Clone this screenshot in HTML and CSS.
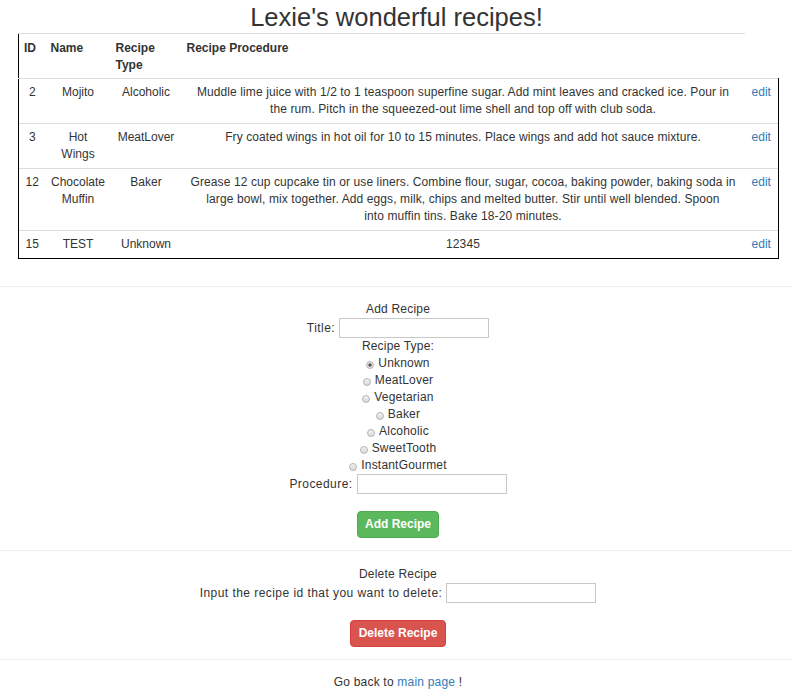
FILE: index.html
```html
<!DOCTYPE html>
<html lang="en">
<head>
<meta charset="utf-8">
<title>Lexie's wonderful recipes!</title>
<link rel="stylesheet" href="styles.css">
</head>
<body>
<h1 class="title">Lexie's wonderful recipes!</h1>
<table class="recipes">
  <colgroup>
    <col class="c-id"><col class="c-name"><col class="c-type"><col class="c-proc"><col class="c-edit">
  </colgroup>
  <thead>
    <tr><th>ID</th><th>Name</th><th>Recipe Type</th><th>Recipe Procedure</th></tr>
  </thead>
  <tbody>
    <tr>
      <td>2</td><td>Mojito</td><td>Alcoholic</td>
      <td class="proc">Muddle lime juice with 1/2 to 1 teaspoon superfine sugar. Add mint leaves and cracked ice. Pour in<br>the rum. Pitch in the squeezed-out lime shell and top off with club soda.</td>
      <td><a href="#">edit</a></td>
    </tr>
    <tr>
      <td>3</td><td>Hot Wings</td><td>MeatLover</td>
      <td class="proc">Fry coated wings in hot oil for 10 to 15 minutes. Place wings and add hot sauce mixture.</td>
      <td><a href="#">edit</a></td>
    </tr>
    <tr>
      <td>12</td><td>Chocolate Muffin</td><td>Baker</td>
      <td class="proc">Grease 12 cup cupcake tin or use liners. Combine flour, sugar, cocoa, baking powder, baking soda in<br>large bowl, mix together. Add eggs, milk, chips and melted butter. Stir until well blended. Spoon<br>into muffin tins. Bake 18-20 minutes.</td>
      <td><a href="#">edit</a></td>
    </tr>
    <tr>
      <td>15</td><td>TEST</td><td>Unknown</td>
      <td class="proc">12345</td>
      <td><a href="#">edit</a></td>
    </tr>
  </tbody>
</table>

<div class="rule rule-first"></div>

<section class="panel panel-add">
  <div class="line">Add Recipe</div>
  <div class="field"><label for="title">Title:</label><input id="title" class="text-input" type="text"></div>
  <div class="line">Recipe Type:</div>
  <label class="radio"><input type="radio" name="rtype" checked><span>Unknown</span></label>
  <label class="radio"><input type="radio" name="rtype"><span>MeatLover</span></label>
  <label class="radio"><input type="radio" name="rtype"><span>Vegetarian</span></label>
  <label class="radio"><input type="radio" name="rtype"><span>Baker</span></label>
  <label class="radio"><input type="radio" name="rtype"><span>Alcoholic</span></label>
  <label class="radio"><input type="radio" name="rtype"><span>SweetTooth</span></label>
  <label class="radio"><input type="radio" name="rtype"><span>InstantGourmet</span></label>
  <div class="field"><label for="proc">Procedure:</label><input id="proc" class="text-input" type="text"></div>
  <div class="btn-row"><button class="btn btn-add" type="button">Add Recipe</button></div>
</section>

<div class="rule"></div>

<section class="panel panel-delete">
  <div class="line">Delete Recipe</div>
  <div class="field"><label for="del">Input the recipe id that you want to delete:</label><input id="del" class="text-input" type="text"></div>
  <div class="btn-row"><button class="btn btn-delete" type="button">Delete Recipe</button></div>
</section>

<div class="rule"></div>

<p class="back">Go back to <a href="#">main page</a> !</p>
</body>
</html>
```
FILE: styles.css
```css
html, body {
  margin: 0;
  padding: 0;
  background: #fff;
}
body {
  font-family: "Liberation Sans", Arial, sans-serif;
  font-size: 12px;
  line-height: 17px;
  color: #333;
}
a {
  color: #337ab7;
  text-decoration: none;
}

.title {
  margin: 0;
  height: 33px;
  font-size: 25.5px;
  line-height: 34px;
  font-weight: normal;
  text-align: center;
  color: #333;
}

.recipes {
  border-collapse: collapse;
  table-layout: fixed;
  width: 760px;
  margin-left: 18px;
}
.c-id { width: 27px; }
.c-name { width: 65px; }
.c-type { width: 71px; }
.c-proc { width: 563px; }
.c-edit { width: 34px; }

.recipes th {
  padding: 6px 5px 4px;
  border-top: 1px solid #ddd;
  border-bottom: 1px solid #ddd;
  text-align: left;
  vertical-align: top;
  font-weight: bold;
}
.recipes td {
  padding: 5px;
  border-top: 1px solid #ddd;
  text-align: center;
  vertical-align: top;
}
.recipes td.proc {
  letter-spacing: 0.1px;
  white-space: nowrap;
}
.recipes th:first-child,
.recipes td:first-child {
  border-left: 1px solid #000;
}
.recipes td:last-child {
  border-right: 1px solid #000;
}
.recipes tbody tr:last-child td {
  border-bottom: 1px solid #000;
}

.rule {
  height: 1px;
  background: #eee;
}
.rule-first {
  margin-top: 27px;
}

.panel {
  display: flex;
  flex-direction: column;
  align-items: center;
  text-align: center;
  letter-spacing: 0.2px;
}
.panel-add {
  padding: 14px 0 12px 3px;
}
.panel-delete {
  padding: 15px 0 12px 3px;
}
.panel .field label {
  letter-spacing: 0.45px;
}

.line {
  height: 17px;
}
.field {
  display: flex;
  align-items: center;
  justify-content: center;
  gap: 4px;
  height: 20px;
}
.text-input {
  box-sizing: border-box;
  width: 150px;
  height: 20px;
  margin: 0;
  padding: 1px 3px;
  border: 1px solid #c8c8c8;
  background: #fff;
  font: inherit;
}

.radio {
  display: flex;
  align-items: center;
  justify-content: center;
  height: 17px;
}
.radio input {
  appearance: none;
  -webkit-appearance: none;
  box-sizing: border-box;
  width: 8px;
  height: 8px;
  margin: 2px 4px 0 0;
  border: 1px solid #b4b4b4;
  border-radius: 50%;
  background: linear-gradient(#f2f2f2, #d9d9d9);
}
.radio input:checked {
  background: radial-gradient(circle, #555 0, #555 1.3px, #e4e4e4 2px);
}

.btn-row {
  display: flex;
  justify-content: center;
  margin-top: 17px;
}
.btn {
  display: block;
  box-sizing: border-box;
  height: 27px;
  padding: 0;
  border: 1px solid transparent;
  border-radius: 4px;
  color: #fff;
  white-space: nowrap;
  letter-spacing: 0;
  font: bold 12px/25px "Liberation Sans", Arial, sans-serif;
}
.btn-add {
  width: 82px;
  background: #5cb85c;
  border-color: #4cae4c;
}
.btn-delete {
  width: 96px;
  background: #d9534f;
  border-color: #d43f3a;
}

.back {
  margin: 0;
  padding: 14px 0 0 3px;
  text-align: center;
  letter-spacing: 0.2px;
}
```
